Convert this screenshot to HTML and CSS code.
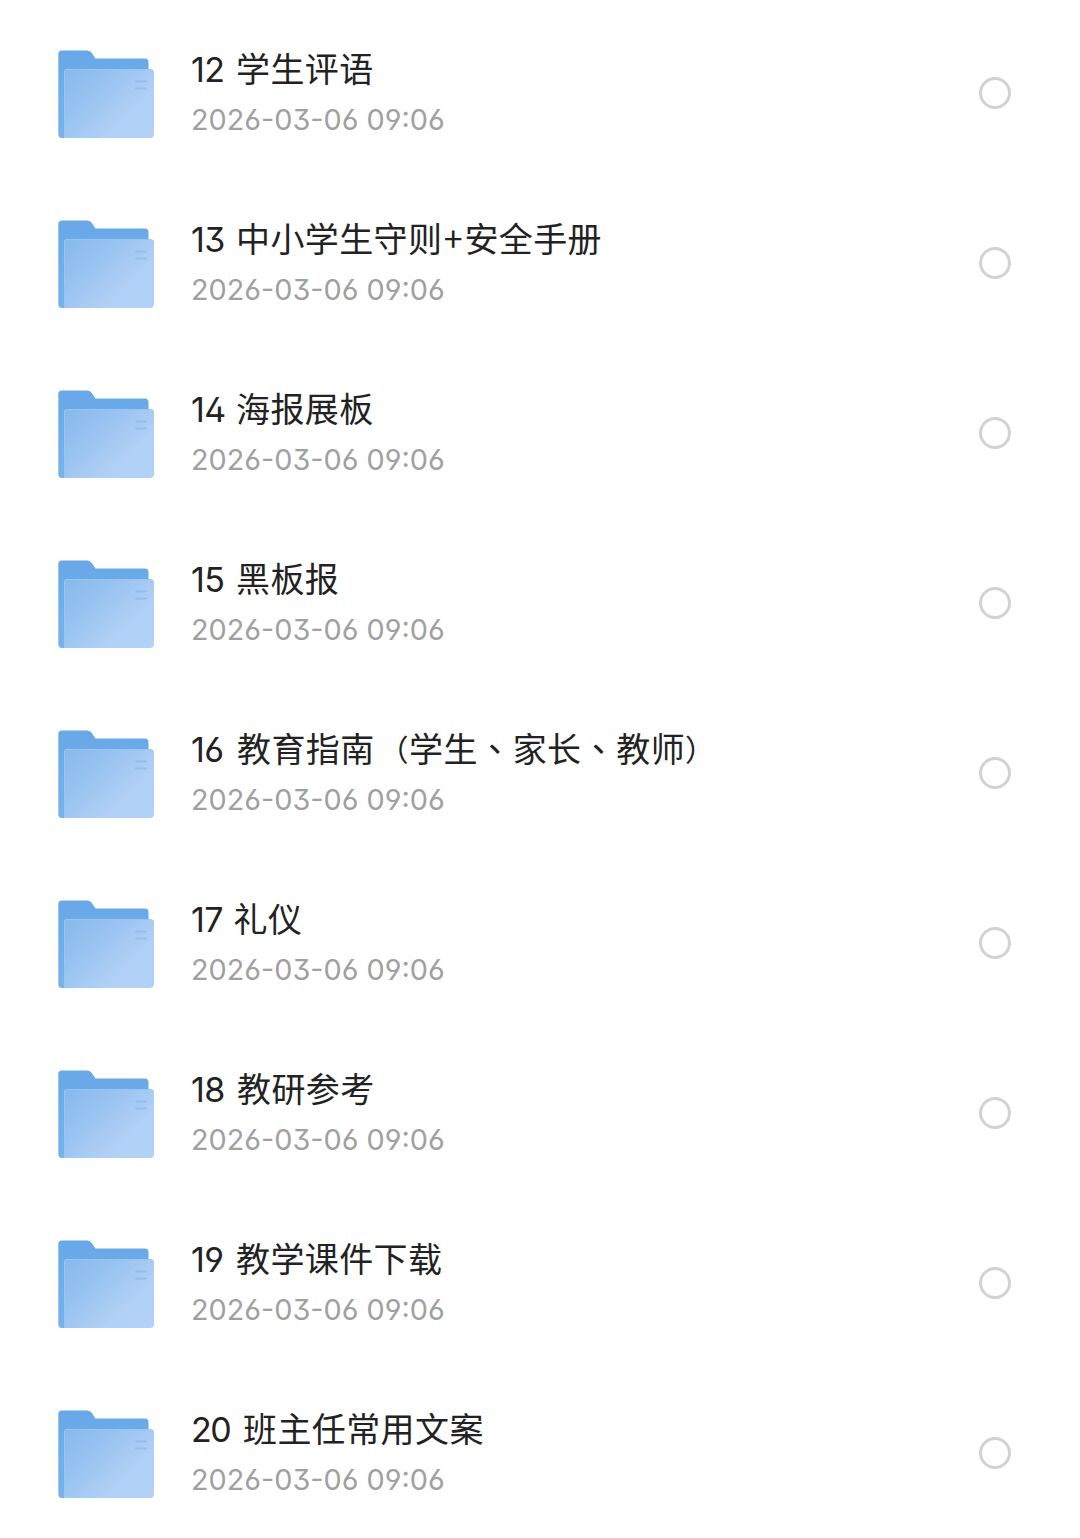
FILE: index.html
```
<!DOCTYPE html>
<html lang="zh-CN">
<head>
<meta charset="utf-8">
<title>文件列表</title>
<link rel="stylesheet" href="styles.css">
</head>
<body>
<svg class="defs" width="0" height="0" aria-hidden="true">
  <defs>
    <linearGradient id="back" x1="0" y1="0" x2="0" y2="1">
      <stop offset="0" stop-color="#68a8e8"/>
      <stop offset="1" stop-color="#78b2ec"/>
    </linearGradient>
    <linearGradient id="front" x1="0" y1="0" x2="1" y2="0.8">
      <stop offset="0" stop-color="#86b9ec"/>
      <stop offset="0.35" stop-color="#97c2f0"/>
      <stop offset="0.75" stop-color="#b0d0f5"/>
      <stop offset="1" stop-color="#b1d1f6"/>
    </linearGradient>
    <symbol id="folder" viewBox="0 0 96 88">
      <path d="M4 .5H29.5Q32.2.5 33.8 3L37.500 8.500H87Q90.500 8.500 90.500 12V80H12V88H4Q.3 88 .3 84V4Q.3.5 4 .5Z" fill="url(#back)"/>
      <path d="M9 19H92.500Q96 19 96 22.500V84Q96 88 92 88H6V22Q6 19 9 19Z" fill="url(#front)"/>
      <path d="M6.500 87V22Q6.500 19.500 9 19.500H92" fill="none" stroke="#98c5f2" stroke-width="1"/>
      <path d="M78 31.500H88M78 38.500H88" fill="none" stroke="#93bff0" stroke-width="2" stroke-linecap="round"/>
    </symbol>
  </defs>
</svg>
<main class="list">
  <div class="row"><svg class="icon"><use href="#folder"/></svg><div class="info"><div class="title"><span class="num">12</span><span>学生评语</span></div><div class="date">2026-03-06 09:06</div></div><span class="radio"></span></div>
  <div class="row"><svg class="icon"><use href="#folder"/></svg><div class="info"><div class="title"><span class="num">13</span><span>中小学生守则<span class="plus">+</span>安全手册</span></div><div class="date">2026-03-06 09:06</div></div><span class="radio"></span></div>
  <div class="row"><svg class="icon"><use href="#folder"/></svg><div class="info"><div class="title"><span class="num">14</span><span>海报展板</span></div><div class="date">2026-03-06 09:06</div></div><span class="radio"></span></div>
  <div class="row"><svg class="icon"><use href="#folder"/></svg><div class="info"><div class="title"><span class="num">15</span><span>黑板报</span></div><div class="date">2026-03-06 09:06</div></div><span class="radio"></span></div>
  <div class="row"><svg class="icon"><use href="#folder"/></svg><div class="info"><div class="title"><span class="num medium">16</span><span>教育指南<span class="paren open">（</span>学生<span class="comma" lang="zh-TW">、</span>家长<span class="comma" lang="zh-TW">、</span>教师<span class="paren">）</span></span></div><div class="date">2026-03-06 09:06</div></div><span class="radio"></span></div>
  <div class="row"><svg class="icon"><use href="#folder"/></svg><div class="info"><div class="title"><span class="num narrow">17</span><span>礼仪</span></div><div class="date">2026-03-06 09:06</div></div><span class="radio"></span></div>
  <div class="row"><svg class="icon"><use href="#folder"/></svg><div class="info"><div class="title"><span class="num medium">18</span><span>教研参考</span></div><div class="date">2026-03-06 09:06</div></div><span class="radio"></span></div>
  <div class="row"><svg class="icon"><use href="#folder"/></svg><div class="info"><div class="title"><span class="num">19</span><span>教学课件下载</span></div><div class="date">2026-03-06 09:06</div></div><span class="radio"></span></div>
  <div class="row"><svg class="icon"><use href="#folder"/></svg><div class="info"><div class="title"><span class="num wide">20</span><span>班主任常用文案</span></div><div class="date">2026-03-06 09:06</div></div><span class="radio"></span></div>
</main>
</body>
</html>
```
FILE: styles.css
```
body {
  margin: 0;
  background: #fff;
  font-family: Inter, "Noto Sans CJK SC", sans-serif;
}

.defs {
  display: block;
}

.list {
  padding-top: 8px;
}

.row {
  display: flex;
  align-items: center;
  box-sizing: border-box;
  height: 170px;
  padding: 0 69px 0 58px;
}

.icon {
  flex: none;
  width: 96px;
  height: 88px;
  margin-top: 2px;
}

.info {
  flex: 1;
  margin-left: 37px;
  padding-top: 2px;
  white-space: nowrap;
}

.title {
  display: flex;
  align-items: baseline;
  height: 51px;
  font-family: "Noto Sans CJK SC", sans-serif;
  font-size: 34px;
  line-height: 50px;
  letter-spacing: 0.4px;
  color: #222;
}

.num {
  flex: none;
  width: 45px;
  font-family: Inter, sans-serif;
  font-feature-settings: "ss01", "cv03", "cv04";
  letter-spacing: -0.6px;
}

.narrow {
  width: 42.5px;
}

.medium {
  width: 46px;
}

.wide {
  width: 52px;
  letter-spacing: -1.5px;
}

.plus {
  display: inline-block;
  width: 22px;
  text-align: center;
}

.comma {
  font-family: "Noto Sans CJK TC", sans-serif;
  letter-spacing: 0.8px;
}

.paren {
  font-size: 30px;
  line-height: 1;
  vertical-align: 1px;
}

.open {
  margin-left: 4px;
}

.date {
  height: 51px;
  font-size: 28.8px;
  line-height: 51px;
  font-feature-settings: "ss01", "cv03", "cv04";
  color: #a0a0a0;
}

.radio {
  flex: none;
  box-sizing: border-box;
  width: 32px;
  height: 32px;
  border: 3px solid #d2d2d2;
  border-radius: 50%;
}
```
